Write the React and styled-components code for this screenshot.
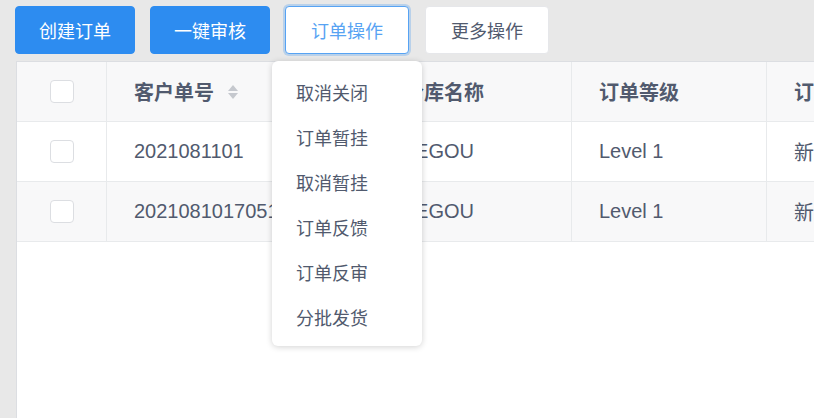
import React from "react";
import styled, { createGlobalStyle } from "styled-components";

const Global = createGlobalStyle`
  html, body { margin: 0; padding: 0; background: #e8e8e8; overflow: hidden; }
  body { font-family: "Liberation Sans", "Noto Sans CJK SC", sans-serif; }
  * { box-sizing: border-box; }
`;

const Page = styled.div`
  width: 814px;
  height: 418px;
  display: flex;
  flex-direction: column;
  gap: 7px;
  padding-top: 6px;
  overflow: hidden;
`;

const Toolbar = styled.div`
  display: flex;
  align-items: center;
  gap: 15px;
  padding-left: 15px;
  position: relative;
  z-index: 2;
`;

const BtnWrap = styled.div`
  position: relative;
  margin-right: 1px;
`;

const Button = styled.button`
  height: 48px;
  width: ${(p) => p.$w}px;
  border-radius: 4px;
  font-family: inherit;
  font-size: 18px;
  padding: 0;
  cursor: pointer;
  border: 1px solid
    ${(p) => (p.$variant === "primary" ? "#2d8cf0" : p.$variant === "focus" ? "#57a3f3" : "#e6e7ea")};
  background: ${(p) => (p.$variant === "primary" ? "#2d8cf0" : "#fff")};
  color: ${(p) => (p.$variant === "primary" ? "#fff" : p.$variant === "focus" ? "#57a3f3" : "#515a6e")};
  box-shadow: ${(p) => (p.$variant === "focus" ? "0 0 0 2px rgba(45,140,240,0.25)" : "none")};
  outline: none;
`;

const Menu = styled.ul`
  position: absolute;
  top: calc(100% + 7px);
  left: 50%;
  transform: translateX(-50%);
  width: 150px;
  margin: 0;
  padding: 8px 0 7px;
  list-style: none;
  background: #fff;
  border-radius: 6px;
  box-shadow: 0 1px 6px rgba(0, 0, 0, 0.18);
`;

const MenuItem = styled.li`
  height: 45px;
  display: flex;
  align-items: center;
  padding-left: 24px;
  font-size: 18px;
  color: #515a6e;
`;

const TableBox = styled.div`
  flex: 1;
  margin-left: 16px;
  background: #fff;
  border-top: 1px solid #dcdee2;
  border-left: 1px solid #dcdee2;
  overflow: hidden;
`;

const Grid = styled.div`
  display: grid;
  grid-template-columns: 90px 270px 195px 195px 195px;
  width: 945px;
`;

const Cell = styled.div`
  height: 60px;
  display: flex;
  align-items: center;
  justify-content: ${(p) => (p.$center ? "center" : "flex-start")};
  padding-left: ${(p) => (p.$center ? 0 : 27)}px;
  border-bottom: 1px solid #e8eaec;
  border-right: 1px solid #e8eaec;
  background: ${(p) => (p.$shade ? "#f8f8f9" : "#fff")};
  color: #515a6e;
  font-size: 20px;
  font-weight: ${(p) => (p.$head ? 700 : 400)};
  white-space: nowrap;
  overflow: hidden;
  gap: 13px;
`;

const Check = styled.span`
  width: 24px;
  height: 23px;
  border: 1px solid #dcdee2;
  border-radius: 4px;
  background: #fff;
  display: inline-block;
`;

const SortIcon = () => (
  <svg width="12" height="16" viewBox="0 0 12 16">
    <path d="M6 1 L11 7 L1 7 Z" fill="#c5c8ce" />
    <path d="M6 15 L11 9 L1 9 Z" fill="#c5c8ce" />
  </svg>
);

const menuItems = ["取消关闭", "订单暂挂", "取消暂挂", "订单反馈", "订单反审", "分批发货"];

const rows = [
  { no: "2021081101", wh: "LEGOU", level: "Level 1", status: "新建" },
  { no: "20210810170512", wh: "LEGOU", level: "Level 1", status: "新建" },
];

export default function App() {
  return (
    <>
      <Global />
      <Page>
        <Toolbar>
          <Button $variant="primary" $w={120}>创建订单</Button>
          <Button $variant="primary" $w={120}>一键审核</Button>
          <BtnWrap>
            <Button $variant="focus" $w={124}>订单操作</Button>
            <Menu>
              {menuItems.map((m) => (
                <MenuItem key={m}>{m}</MenuItem>
              ))}
            </Menu>
          </BtnWrap>
          <Button $w={124}>更多操作</Button>
        </Toolbar>
        <TableBox>
          <Grid>
            <Cell $head $shade $center><Check /></Cell>
            <Cell $head $shade>客户单号<SortIcon /></Cell>
            <Cell $head $shade>仓库名称</Cell>
            <Cell $head $shade>订单等级</Cell>
            <Cell $head $shade>订单状态</Cell>
            {rows.map((r, i) => (
              <React.Fragment key={r.no}>
                <Cell $center $shade={i % 2 === 1}><Check /></Cell>
                <Cell $shade={i % 2 === 1}>{r.no}</Cell>
                <Cell $shade={i % 2 === 1}>{r.wh}</Cell>
                <Cell $shade={i % 2 === 1}>{r.level}</Cell>
                <Cell $shade={i % 2 === 1}>{r.status}</Cell>
              </React.Fragment>
            ))}
          </Grid>
        </TableBox>
      </Page>
    </>
  );
}
